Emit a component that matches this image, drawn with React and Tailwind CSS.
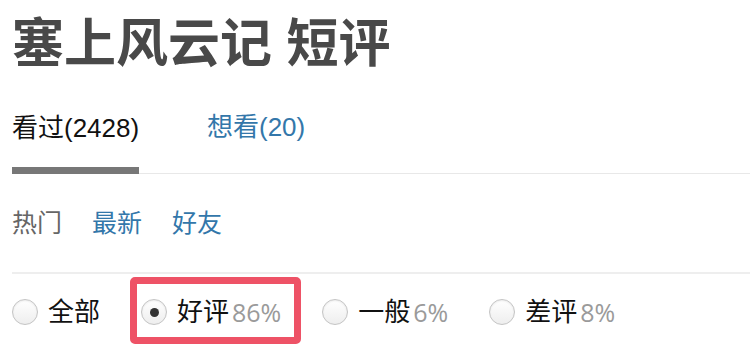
const cjk = { fontFamily: '"Liberation Sans", "Noto Sans CJK SC", sans-serif' };

function Radio({ checked }) {
  return (
    <span className="relative flex h-[26px] w-[26px] shrink-0 items-center justify-center rounded-full border border-[#c4c4c4] bg-gradient-to-b from-white to-[#eeeeee] shadow-[inset_0_1px_2px_rgba(0,0,0,0.08)]">
      {checked && <span className="h-[9px] w-[9px] rounded-full bg-[#333]" />}
    </span>
  );
}

function Option({ label, pct, checked, highlight }) {
  return (
    <div className="relative flex h-[26px] items-center whitespace-nowrap">
      {highlight && (
        <div className="pointer-events-none absolute -left-[11px] -right-[20px] -top-[22px] -bottom-[19px] rounded-[5px] border-[7px] border-[#ee5266]" />
      )}
      <Radio checked={checked} />
      <span className="ml-[10px] text-[26px] leading-[26px] text-[#111]">{label}</span>
      {pct && (
        <span
          className="ml-[3px] text-[25px] leading-[26px] text-[#9a9a9a]"
          style={{ fontFamily: '"Open Sans", "Noto Sans CJK SC", sans-serif' }}
        >
          {pct}
        </span>
      )}
    </div>
  );
}

export default function App() {
  return (
    <div className="h-[348px] w-[750px] overflow-hidden bg-white pl-[12px]" style={cjk}>
      <h1 className="flex h-[90px] items-center whitespace-nowrap pb-[2px] text-[52px] font-bold leading-none text-[#494949]">
        塞上风云记 短评
      </h1>

      <div className="flex items-end border-b border-[#e8e8e8] whitespace-nowrap">
        <div className="w-[127px]">
          <div className="pt-[25px] pb-[26px] text-[26px] leading-[25px] text-[#111]">看过(2428)</div>
          <div className="-mb-px h-[7px] bg-[#777]" />
        </div>
        <div className="ml-[68px] pt-[25px] pb-[33px] text-[26px] leading-[25px] text-[#3377aa]">想看(20)</div>
      </div>

      <div className="flex h-[100px] items-center gap-[30px] border-b-2 border-[#eeeeee] text-[25px] leading-[25px] whitespace-nowrap">
        <span className="text-[#666]">热门</span>
        <span className="text-[#3377aa]">最新</span>
        <span className="text-[#3377aa]">好友</span>
      </div>

      <div className="flex h-[76px] items-center gap-[41px]">
        <Option label="全部" />
        <Option label="好评" pct="86%" checked highlight />
        <Option label="一般" pct="6%" />
        <Option label="差评" pct="8%" />
      </div>
    </div>
  );
}
